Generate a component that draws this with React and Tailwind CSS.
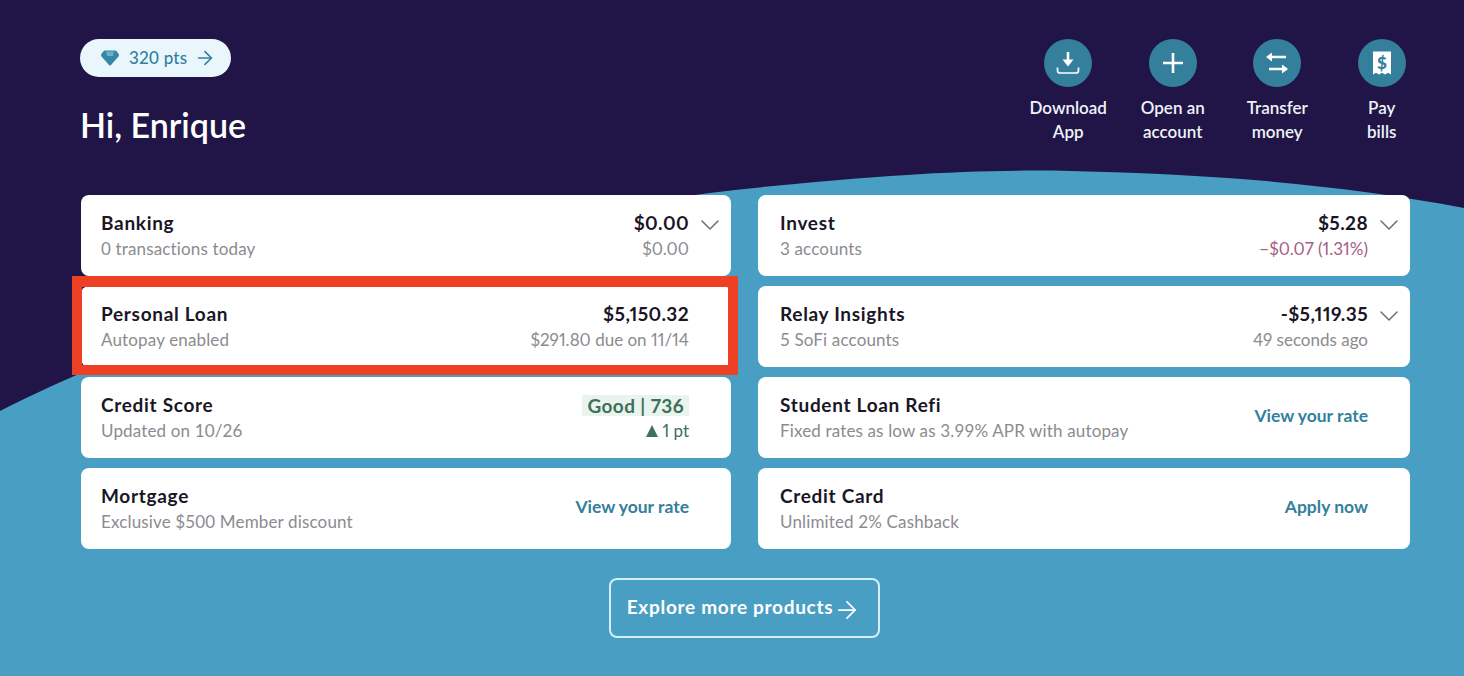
import React from "react";
import { ArrowRight, ChevronDown } from "lucide-react";

const font = { fontFamily: '"Lato", "Open Sans", sans-serif' };

const DownloadIcon = () => (
  <svg viewBox="0 0 24 24" className="w-6 h-6" fill="none" stroke="white" strokeWidth="2.6">
    <path d="M12 1v11" />
    <path d="M6.5 8.5h11L12 15.5z" fill="white" stroke="none" />
    <path d="M1.5 16.5v3a2.5 2.5 0 0 0 2.5 2.5h16a2.5 2.5 0 0 0 2.5-2.5v-3" strokeWidth="1.7" />
  </svg>
);

const PlusIcon = () => (
  <svg viewBox="0 0 24 24" className="w-6 h-6" fill="none" stroke="white" strokeWidth="2.6">
    <path d="M12 2v20M2 12h20" />
  </svg>
);

const TransferIcon = () => (
  <svg viewBox="0 0 24 24" className="w-6 h-6" fill="none" stroke="white" strokeWidth="2.4">
    <path d="M5 6h16M22 18H4" />
    <path d="M7 1.5v9L1 6zM17 13.5v9l6-4.5z" fill="white" stroke="none" />
  </svg>
);

const BillIcon = () => (
  <svg viewBox="0 0 24 24" className="w-6 h-6">
    <path d="M3 0.5h18v23l-3-1.8-3 1.8-3-1.8-3 1.8-3-1.8-3 1.8z" fill="white" />
    <text x="12" y="17.5" textAnchor="middle" fontSize="17" fontWeight="900" fill="#337f9c" style={font}>$</text>
  </svg>
);

const GemIcon = () => (
  <svg viewBox="0 0 18 16" className="w-[18px] h-4">
    <path d="M4 0.5h10a2 2 0 0 1 1.6.8L17.6 4a2 2 0 0 1-.1 2.4L10 15a1.4 1.4 0 0 1-2 0L.5 6.4A2 2 0 0 1 .4 4l2-2.7A2 2 0 0 1 4 .5z" fill="#3587a6" />
    <path d="M5 1.5h8L12 6H6z" fill="#63b1cc" />
  </svg>
);

const actions = [
  { icon: DownloadIcon, lines: ["Download", "App"] },
  { icon: PlusIcon, lines: ["Open an", "account"] },
  { icon: TransferIcon, lines: ["Transfer", "money"] },
  { icon: BillIcon, lines: ["Pay", "bills"] },
];

const Card = ({ title, sub, children, chevron, highlight, right }) => (
  <div className={`relative h-[81px] bg-white rounded-lg flex items-start justify-between ${right ? "pl-[22px]" : "pl-[20px]"}`}>
    <div className="pt-[16px]">
      <div className="text-[19px] leading-6 font-bold tracking-[0.7px] text-[#1a1626]">{title}</div>
      <div className="text-[17px] leading-6 tracking-[0.15px] text-[#8b8b90] mt-[2px]">{sub}</div>
    </div>
    <div className="flex items-start h-full">
      <div className="pt-[16px] text-right proportional-nums">{children}</div>
      <div className="w-[42px] pt-[14px] flex justify-center">
        {chevron && <ChevronDown className="w-8 h-8 text-[#6f6f74] -ml-px" strokeWidth={1.15} />}
      </div>
    </div>
    {highlight && (
      <div className="absolute -left-[9px] -right-[7px] -top-[9.5px] -bottom-[8.5px] border-[10px] border-t-[11px] border-[#ee4024]" />
    )}
  </div>
);

const Amount = ({ value, note, noteClass = "text-[#8b8b90]" }) => (
  <>
    <div className="text-[19px] leading-6 font-bold text-[#1a1626] tracking-[0.4px]">{value}</div>
    <div className={`text-[17px] leading-6 mt-[2px] ${noteClass}`}>{note}</div>
  </>
);

const RateLink = ({ label }) => (
  <div className="text-[17.5px] leading-6 font-bold text-[#337f9c] mt-[11px]">{label}</div>
);

export default function App() {
  return (
    <div className="relative w-[1464px] h-[676px] overflow-hidden bg-[#211548]" style={font}>
      {/* wave behind the cards */}
      <svg className="absolute inset-0 w-full h-full" viewBox="0 0 1464 676" preserveAspectRatio="none">
        <path
          d="M0 411C170 325 480 218 735 190C880 174 985 169 1070 171C1220 174 1350 186 1464 208V676H0Z"
          fill="#489ec3"
        />
      </svg>

      <div className="relative pl-[81px] pr-[54px]">
        <div className="flex justify-between items-start h-[194.5px]">
          <div className="pt-[39px]">
            <div className="-ml-px w-[151px] h-[38px] rounded-full bg-[#e9f7fd] flex items-center pl-[21px] gap-[10px] text-[#337f9c] text-[17px]">
              <GemIcon />
              <span className="font-medium tracking-[0.2px]">320 pts</span>
              <ArrowRight className="w-[22px] h-[22px] -ml-[3px]" strokeWidth={1.75} />
            </div>
            <div className="-ml-px mt-[24px] text-[34px] leading-[48px] font-semibold text-white">Hi, Enrique</div>
          </div>
          <div className="flex pt-[39px] -mr-[24px]">
            {actions.map(({ icon: Icon, lines }) => (
              <div key={lines[0]} className="w-[104.5px] flex flex-col items-center">
                <div className="w-12 h-12 rounded-full bg-[#337f9c] flex items-center justify-center">
                  <Icon />
                </div>
                <div className="mt-[9px] text-[17px] leading-6 font-semibold text-[#eef3f8] text-center">
                  {lines.map((l) => (
                    <div key={l}>{l}</div>
                  ))}
                </div>
              </div>
            ))}
          </div>
        </div>

        <div className="grid grid-cols-[650px_652px] gap-x-[27px] gap-y-[10px]">
          <Card title="Banking" sub="0 transactions today" chevron>
            <Amount value="$0.00" note="$0.00" />
          </Card>
          <Card title="Invest" sub="3 accounts" chevron right>
            <Amount value="$5.28" note="−$0.07 (1.31%)" noteClass="text-[#a4607f]" />
          </Card>
          <Card title="Personal Loan" sub="Autopay enabled" highlight>
            <Amount value="$5,150.32" note="$291.80 due on 11/14" />
          </Card>
          <Card title="Relay Insights" sub="5 SoFi accounts" chevron right>
            <Amount value="-$5,119.35" note="49 seconds ago" />
          </Card>
          <Card title="Credit Score" sub="Updated on 10/26">
            <div className="inline-block text-[19px] leading-[21px] font-bold text-[#3f7059] bg-[#eaf4ee] px-[5px] tracking-[0.4px] mt-[2px]">
              Good | 736
            </div>
            <div className="text-[17px] leading-6 text-[#3f7059] flex items-center justify-end gap-1">
              <span className="w-0 h-0 border-x-[6.5px] border-x-transparent border-b-[12px] border-b-[#3f7059]" />
              1 pt
            </div>
          </Card>
          <Card title="Student Loan Refi" sub="Fixed rates as low as 3.99% APR with autopay" right>
            <RateLink label="View your rate" />
          </Card>
          <Card title="Mortgage" sub="Exclusive $500 Member discount">
            <RateLink label="View your rate" />
          </Card>
          <Card title="Credit Card" sub="Unlimited 2% Cashback" right>
            <RateLink label="Apply now" />
          </Card>
        </div>

        <div className="flex justify-center pt-[29px] pr-[3px]">
          <div className="w-[271px] h-[60px] border-2 border-[#d5eef8] rounded-lg flex items-center justify-center text-white text-[19px] tracking-[0.7px] font-bold">
            Explore more products
            <ArrowRight className="w-7 h-7 mt-1" strokeWidth={1.5} />
          </div>
        </div>
      </div>
    </div>
  );
}
